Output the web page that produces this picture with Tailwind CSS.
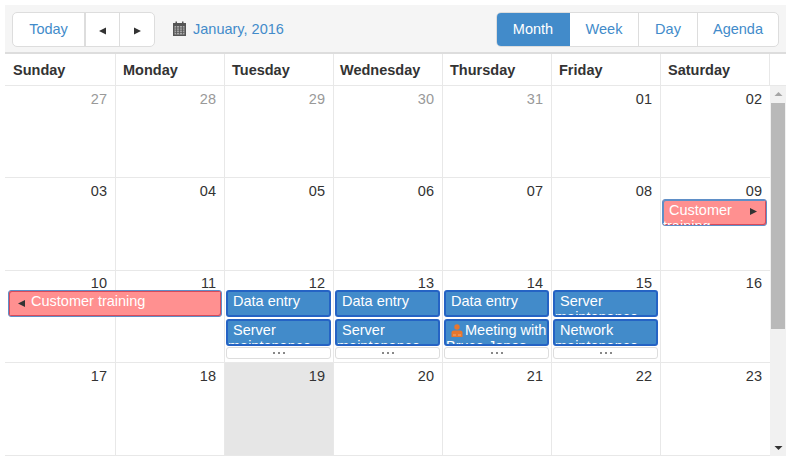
<!DOCTYPE html>
<html>
<head>
<meta charset="utf-8">
<script src="https://cdn.jsdelivr.net/npm/@tailwindcss/browser@4"></script>
</head>
<body class="bg-white font-['Liberation_Sans',Arial,sans-serif] text-[#333]">
<div class="w-[792px] h-[461px] overflow-hidden pl-[5px] pt-[5px]">
  <div class="w-[781px]">
    <!-- toolbar -->
    <div class="h-[49px] bg-[#f5f5f5] border-b-2 border-[#ddd] flex items-start justify-between pt-[7px] pl-[7px] pr-[7px]">
      <div class="flex items-center">
        <div class="flex h-[35px] bg-white border border-[#ddd] rounded-[5px] text-[#428bca] text-[14.5px]">
          <div class="w-[73px] flex items-center justify-center border-r-2 border-[#ddd]">Today</div>
          <div class="w-[34px] flex items-center justify-center border-r border-[#ddd]"><svg width="7" height="8" viewBox="0 0 7 8" class="mt-[3px]"><path d="M7 0.5V7.5L0 4Z" fill="#333"/></svg></div>
          <div class="w-[34px] flex items-center justify-center"><svg width="7" height="8" viewBox="0 0 7 8" class="mt-[3px]"><path d="M0 0.5V7.5L7 4Z" fill="#333"/></svg></div>
        </div>
        <svg width="13" height="15" viewBox="0 0 13 15" class="ml-[18px] mt-[-2px]"><path d="M0 2H2.5V0.5H4V2H9V0.5H10.5V2H13V15H0Z" fill="#555"/><path d="M1.5 5H11.5V13.5H1.5Z" fill="#aaa"/><path d="M1.5 7H11.5M1.5 9.2H11.5M1.5 11.4H11.5M3.5 5V13.5M6.5 5V13.5M9.5 5V13.5" stroke="#555" stroke-width="0.8"/></svg>
        <div class="ml-[7px] text-[#428bca] text-[14.5px]">January, 2016</div>
      </div>
      <div class="flex h-[35px] bg-white border border-[#ddd] rounded-[5px] text-[#428bca] text-[14.5px] overflow-hidden">
        <div class="w-[74px] -my-px -ml-px flex items-center justify-center bg-[#428bca] text-white">Month</div>
        <div class="w-[69px] flex items-center justify-center border-r border-[#ddd]">Week</div>
        <div class="w-[59px] flex items-center justify-center border-r border-[#ddd]">Day</div>
        <div class="w-[80px] flex items-center justify-center">Agenda</div>
      </div>
    </div>
    <!-- header -->
    <div class="flex h-[32px] border-b border-[#e8e8e8] text-[14.5px] font-bold text-[#333]">
      <div class="w-[111px] pl-[8px] pt-[6px] border-r border-[#e8e8e8]">Sunday</div>
      <div class="w-[109px] pl-[7px] pt-[6px] border-r border-[#e8e8e8]">Monday</div>
      <div class="w-[109px] pl-[7px] pt-[6px] border-r border-[#e8e8e8]">Tuesday</div>
      <div class="w-[109px] pl-[6px] pt-[6px] border-r border-[#e8e8e8]">Wednesday</div>
      <div class="w-[109px] pl-[7px] pt-[6px] border-r border-[#e8e8e8]">Thursday</div>
      <div class="w-[109px] pl-[7px] pt-[6px] border-r border-[#e8e8e8]">Friday</div>
      <div class="w-[109px] pl-[7px] pt-[6px] border-r border-[#e8e8e8]">Saturday</div>
    </div>
    <div class="flex h-[370px]">
      <div class="w-[765px] text-[14.5px] leading-[17px] border-b border-[#e8e8e8]">
        <!-- week 1 -->
        <div class="flex h-[92px] border-b border-[#e8e8e8] text-right text-[#999]">
          <div class="w-[111px] pt-[5px] pr-[8px] border-r border-[#e8e8e8]">27</div>
          <div class="w-[109px] pt-[5px] pr-[8px] border-r border-[#e8e8e8]">28</div>
          <div class="w-[109px] pt-[5px] pr-[8px] border-r border-[#e8e8e8]">29</div>
          <div class="w-[109px] pt-[5px] pr-[8px] border-r border-[#e8e8e8]">30</div>
          <div class="w-[109px] pt-[5px] pr-[8px] border-r border-[#e8e8e8]">31</div>
          <div class="w-[109px] pt-[5px] pr-[8px] border-r border-[#e8e8e8] text-[#333]">01</div>
          <div class="w-[109px] pt-[5px] pr-[8px] text-[#333]">02</div>
        </div>
        <!-- week 2 -->
        <div class="flex h-[93px] border-b border-[#e8e8e8] text-right">
          <div class="w-[111px] pt-[5px] pr-[8px] border-r border-[#e8e8e8]">03</div>
          <div class="w-[109px] pt-[5px] pr-[8px] border-r border-[#e8e8e8]">04</div>
          <div class="w-[109px] pt-[5px] pr-[8px] border-r border-[#e8e8e8]">05</div>
          <div class="w-[109px] pt-[5px] pr-[8px] border-r border-[#e8e8e8]">06</div>
          <div class="w-[109px] pt-[5px] pr-[8px] border-r border-[#e8e8e8]">07</div>
          <div class="w-[109px] pt-[5px] pr-[8px] border-r border-[#e8e8e8]">08</div>
          <div class="w-[109px] pt-[5px] pr-[8px]">09
            <div class="-mr-[5px] ml-[1px] h-[27px] mt-[-1px] bg-[#ff9090] border border-[#5f8fc7] rounded-[3px] shadow-[inset_-1px_-1px_0_#d84a5a,inset_1px_1px_0_#5f8fc7] text-white text-left indent-[6px] pt-[2px] leading-[16px] overflow-hidden relative">Customer training
              <svg width="7" height="7" viewBox="0 0 7 7" class="absolute right-[9px] top-[8px]"><path d="M0 0V7L7 3.5Z" fill="#333"/></svg>
            </div>
          </div>
        </div>
        <!-- week 3 -->
        <div class="flex h-[92px] border-b border-[#e8e8e8] text-right">
          <div class="w-[111px] pt-[4px] pr-[8px] border-r border-[#e8e8e8]">10
            <div class="relative w-[214px] h-[27px] ml-[3px] mt-[-2px] bg-[#ff9090] border border-[#5f8fc7] rounded-[3px] shadow-[inset_1px_1px_0_#d84a5a,inset_-1px_-1px_0_#d84a5a] text-white text-left pl-[22px] pt-[2px] leading-[16px] overflow-hidden">
              <svg width="7" height="7" viewBox="0 0 7 7" class="absolute left-[9px] top-[9px]"><path d="M7 0V7L0 3.5Z" fill="#333"/></svg>
              Customer training
            </div>
          </div>
          <div class="w-[109px] pt-[4px] pr-[8px] border-r border-[#e8e8e8]">11</div>
          <div class="w-[109px] pt-[4px] pl-[1px] pr-[2px] border-r border-[#e8e8e8]"><div class="pr-[6px]">12</div>
            <div class="mt-[-2px] h-[27px] bg-[#428bca] border-2 border-[#2563c4] rounded-[3px] text-white text-left indent-[5px] pt-[1px] leading-[16px] overflow-hidden">Data entry</div>
            <div class="mt-[2px] h-[27px] bg-[#428bca] border-2 border-[#2563c4] rounded-[3px] text-white text-left indent-[5px] pt-[1px] leading-[16px] overflow-hidden">Server maintenance</div>
            <div class="mt-[1px] h-[12px] bg-white border border-[#ddd] rounded-[3px] flex items-center justify-center gap-[3px]"><i class="w-[2px] h-[2px] bg-[#888]"></i><i class="w-[2px] h-[2px] bg-[#888]"></i><i class="w-[2px] h-[2px] bg-[#888]"></i></div>
          </div>
          <div class="w-[109px] pt-[4px] pl-[1px] pr-[2px] border-r border-[#e8e8e8]"><div class="pr-[6px]">13</div>
            <div class="mt-[-2px] h-[27px] bg-[#428bca] border-2 border-[#2563c4] rounded-[3px] text-white text-left indent-[5px] pt-[1px] leading-[16px] overflow-hidden">Data entry</div>
            <div class="mt-[2px] h-[27px] bg-[#428bca] border-2 border-[#2563c4] rounded-[3px] text-white text-left indent-[5px] pt-[1px] leading-[16px] overflow-hidden">Server maintenance</div>
            <div class="mt-[1px] h-[12px] bg-white border border-[#ddd] rounded-[3px] flex items-center justify-center gap-[3px]"><i class="w-[2px] h-[2px] bg-[#888]"></i><i class="w-[2px] h-[2px] bg-[#888]"></i><i class="w-[2px] h-[2px] bg-[#888]"></i></div>
          </div>
          <div class="w-[109px] pt-[4px] pl-[1px] pr-[2px] border-r border-[#e8e8e8]"><div class="pr-[6px]">14</div>
            <div class="mt-[-2px] h-[27px] bg-[#428bca] border-2 border-[#2563c4] rounded-[3px] text-white text-left indent-[5px] pt-[1px] leading-[16px] overflow-hidden">Data entry</div>
            <div class="mt-[2px] h-[27px] bg-[#428bca] border-2 border-[#2563c4] rounded-[3px] text-white text-left indent-[5px] pt-[1px] leading-[16px] overflow-hidden"><svg width="12" height="13" viewBox="0 0 12 13" class="inline-block align-[-2px] mr-[2px]"><circle cx="6" cy="3" r="2.7" fill="#e8772e"/><path d="M0.5 13V8.5Q0.5 6.5 3 6.5H9Q11.5 6.5 11.5 8.5V13Z" fill="#e8772e"/><path d="M2 11H5M7 11H10" stroke="#f2b48a" stroke-width="0.8"/></svg>Meeting with Bruce Jones</div>
            <div class="mt-[1px] h-[12px] bg-white border border-[#ddd] rounded-[3px] flex items-center justify-center gap-[3px]"><i class="w-[2px] h-[2px] bg-[#888]"></i><i class="w-[2px] h-[2px] bg-[#888]"></i><i class="w-[2px] h-[2px] bg-[#888]"></i></div>
          </div>
          <div class="w-[109px] pt-[4px] pl-[1px] pr-[2px] border-r border-[#e8e8e8]"><div class="pr-[6px]">15</div>
            <div class="mt-[-2px] h-[27px] bg-[#428bca] border-2 border-[#2563c4] rounded-[3px] text-white text-left indent-[5px] pt-[1px] leading-[16px] overflow-hidden">Server maintenance</div>
            <div class="mt-[2px] h-[27px] bg-[#428bca] border-2 border-[#2563c4] rounded-[3px] text-white text-left indent-[5px] pt-[1px] leading-[16px] overflow-hidden">Network maintenance</div>
            <div class="mt-[1px] h-[12px] bg-white border border-[#ddd] rounded-[3px] flex items-center justify-center gap-[3px]"><i class="w-[2px] h-[2px] bg-[#888]"></i><i class="w-[2px] h-[2px] bg-[#888]"></i><i class="w-[2px] h-[2px] bg-[#888]"></i></div>
          </div>
          <div class="w-[109px] pt-[4px] pr-[8px]">16</div>
        </div>
        <!-- week 4 -->
        <div class="flex h-[92px] text-right">
          <div class="w-[111px] pt-[5px] pr-[8px] border-r border-[#e8e8e8]">17</div>
          <div class="w-[109px] pt-[5px] pr-[8px] border-r border-[#e8e8e8]">18</div>
          <div class="w-[109px] pt-[5px] pr-[8px] border-r border-[#e8e8e8] bg-[#e6e6e6]">19</div>
          <div class="w-[109px] pt-[5px] pr-[8px] border-r border-[#e8e8e8]">20</div>
          <div class="w-[109px] pt-[5px] pr-[8px] border-r border-[#e8e8e8]">21</div>
          <div class="w-[109px] pt-[5px] pr-[8px] border-r border-[#e8e8e8]">22</div>
          <div class="w-[109px] pt-[5px] pr-[8px]">23</div>
        </div>
      </div>
      <!-- scrollbar -->
      <div class="w-[16px] h-[370px] bg-[#f1f1f1] flex flex-col items-center">
        <svg width="9" height="6" viewBox="0 0 9 6" class="mt-[5px]"><path d="M0.5 5L4.5 1L8.5 5Z" fill="#a5a5a5"/></svg>
        <div class="w-[14px] h-[226px] bg-[#b9b9b9] mt-[6px]"></div>
        <div class="flex-1"></div>
        <svg width="9" height="6" viewBox="0 0 9 6" class="mb-[5px]"><path d="M0.5 1L4.5 5L8.5 1Z" fill="#333"/></svg>
      </div>
    </div>
  </div>
</div>
</body>
</html>
